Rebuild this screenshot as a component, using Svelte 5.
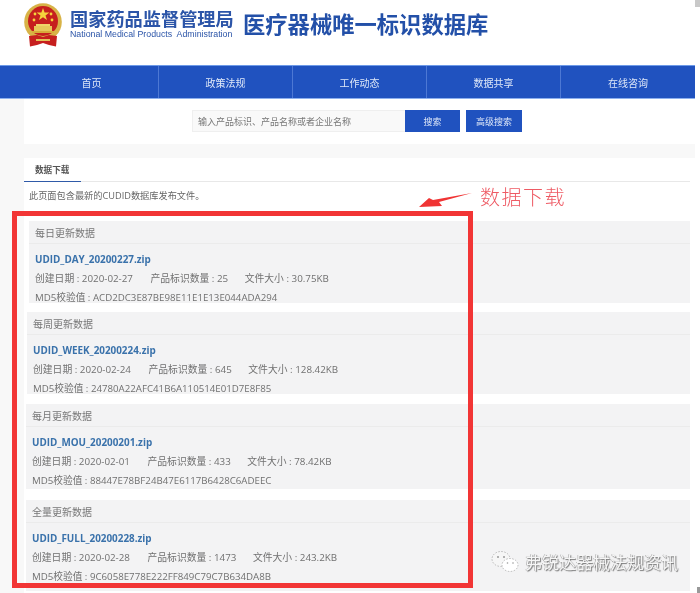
<script>
  const NAV = ['首页', '政策法规', '工作动态', '数据共享', '在线咨询'];
  const PANELS = [
    { title: '每日更新数据', file: 'UDID_DAY_20200227.zip', date: '2020-02-27', count: '25', size: '30.75KB', md5: 'ACD2DC3E87BE98E11E1E13E044ADA294', left: 5, gap: 9, height: 82 },
    { title: '每周更新数据', file: 'UDID_WEEK_20200224.zip', date: '2020-02-24', count: '645', size: '128.42KB', md5: '24780A22AFC41B6A110514E01D7E8F85', left: 3, gap: 10, height: 82 },
    { title: '每月更新数据', file: 'UDID_MOU_20200201.zip', date: '2020-02-01', count: '433', size: '78.42KB', md5: '88447E78BF24B47E6117B6428C6ADEEC', left: 2, gap: 11, height: 85 },
    { title: '全量更新数据', file: 'UDID_FULL_20200228.zip', date: '2020-02-28', count: '1473', size: '243.2KB', md5: '9C6058E778E222FF849C79C7B634DA8B', left: 2, gap: 0, height: 91 },
  ];
</script>

<div class="page">
  <header class="top">
    <svg class="emblem" viewBox="0 0 40 44" width="40" height="44">
      <circle cx="20" cy="19" r="18.8" fill="#d8b347" />
      <circle cx="20" cy="18" r="15" fill="#c61f1e" />
      <polygon points="20,5 21.6,9.6 26.4,9.6 22.5,12.4 24,17 20,14.2 16,17 17.5,12.4 13.6,9.6 18.4,9.6" fill="#f5d33c" />
      <circle cx="12" cy="11" r="1.4" fill="#f5d33c" />
      <circle cx="28" cy="11" r="1.4" fill="#f5d33c" />
      <circle cx="11" cy="17" r="1.4" fill="#f5d33c" />
      <circle cx="29" cy="17" r="1.4" fill="#f5d33c" />
      <rect x="13" y="21" width="14" height="2" fill="#efd469" />
      <rect x="11" y="23" width="18" height="5" fill="#e6c85a" />
      <rect x="9" y="28" width="22" height="2" fill="#d7ab3a" />
      <path d="M6 33 L14 32 L20 34 L26 32 L34 33 L33 43.5 L26 42 L20 40 L14 42 L7 43.5 Z" fill="#c61f1e" />
      <rect x="13" y="36" width="14" height="2" fill="#e2c25a" />
    </svg>
    <div class="agency">
      <div class="agency-cn">国家药品监督管理局</div>
      <div class="agency-en">National Medical Products&nbsp; Administration</div>
    </div>
    <h1 class="db-title">医疗器械唯一标识数据库</h1>
  </header>

  <nav class="nav">
    {#each NAV as item}
      <a class="nav-item" href="#top">{item}</a>
    {/each}
  </nav>

  <main class="body">
    <section class="search">
      <input class="search-input" type="text" placeholder="输入产品标识、产品名称或者企业名称" />
      <button class="btn">搜索</button>
      <button class="btn btn-adv">高级搜索</button>
    </section>

    <section class="content">
      <div class="tabs"><span class="tab">数据下载</span></div>
      <p class="intro">此页面包含最新的CUDID数据库发布文件。</p>

      {#each PANELS as p}
        <article class="panel" style:margin-left="{p.left}px" style:margin-bottom="{p.gap}px" style:height="{p.height}px">
          <div class="panel-head">{p.title}</div>
          <div class="panel-body">
            <a class="file" href="#top">{p.file}</a>
            <div class="meta">
              <span class="m-date">创建日期 : {p.date}</span>
              <span class="m-count">产品标识数量 : {p.count}</span>
              <span>文件大小 : {p.size}</span>
            </div>
            <div class="meta md5">MD5校验值 : {p.md5}</div>
          </div>
        </article>
      {/each}
    </section>
  </main>

  <!-- annotation drawn on top of the screenshot -->
  <div class="red-box"></div>
  <svg class="arrow" viewBox="0 0 56 18" width="56" height="18">
    <polygon points="54,1 21,10 24,14 1,15 11,6 15,8" fill="#f03434" />
  </svg>
  <div class="note">数据下载</div>

  <div class="watermark">
    <svg viewBox="0 0 30 24" width="30" height="24">
      <ellipse cx="11" cy="9" rx="9" ry="7.5" fill="#f6f6f6" stroke="#aaa" stroke-width="0.8" stroke-dasharray="1.5 1.5" />
      <ellipse cx="20" cy="15" rx="8" ry="6.5" fill="#fff" stroke="#aaa" stroke-width="0.8" stroke-dasharray="1.5 1.5" />
      <circle cx="8" cy="7" r="1" fill="#999" />
      <circle cx="14" cy="7" r="1" fill="#999" />
      <circle cx="17.5" cy="13" r="0.8" fill="#999" />
      <circle cx="23" cy="13" r="0.8" fill="#999" />
    </svg>
    <span>弗锐达器械法规资讯</span>
  </div>

  <div class="scroll-thumb"></div>
  <div class="scroll-thumb bottom"></div>
</div>

<style>
  :global(body) {
    margin: 0;
    background: #fff;
  }

  .page {
    position: relative;
    width: 700px;
    height: 593px;
    overflow: hidden;
    background: #fff;
    font-family: "Open Sans", "Noto Sans CJK SC", sans-serif;
    color: #666;
    filter: blur(0.35px);
  }

  .top {
    height: 65px;
    display: flex;
    align-items: flex-start;
    padding-left: 23px;
    box-sizing: border-box;
  }

  .emblem { margin-top: 3px; flex: none; }

  .agency {
    margin-left: 7px;
    margin-top: 8px;
    width: 164px;
    color: #2c55a8;
  }
  .agency-cn {
    font: 700 18.2px/21px "Noto Sans CJK SC", sans-serif;
    white-space: nowrap;
  }
  .agency-en {
    font: 400 8.8px/10px "Liberation Sans", sans-serif;
    white-space: nowrap;
  }

  .db-title {
    margin: 7px 0 0 9px;
    font: 700 22.3px/32px "Noto Sans CJK SC", sans-serif;
    color: #2350a8;
    white-space: nowrap;
  }

  .nav {
    width: 695px;
    height: 34px;
    box-sizing: border-box;
    padding-left: 25px;
    display: grid;
    grid-template-columns: repeat(5, 134px);
    background: #2052bf;
    border-top: 1px solid #6d9ae8;
    border-bottom: 1px solid #8db0ee;
  }
  .nav-item {
    display: flex;
    align-items: center;
    justify-content: center;
    font: 400 10px "Noto Sans CJK SC", sans-serif;
    color: #dfe8f8;
    text-decoration: none;
    border-right: 1px solid #4d78d4;
  }
  .nav-item:last-child { border-right: 0; }

  .body {
    width: 695px;
    height: 494px;
    box-sizing: border-box;
    padding-left: 24px;
    background: #f8f8f8;
  }

  .search {
    height: 45px;
    background: #fff;
    box-sizing: border-box;
    padding: 11px 0 0 168px;
    display: flex;
    align-items: flex-start;
  }
  .search-input {
    width: 213px;
    height: 22px;
    box-sizing: border-box;
    padding: 0 5px;
    background: #f9f9f9;
    border: 1px solid #efefef;
    border-right: 0;
    outline: none;
    font: 400 9px "Noto Sans CJK SC", sans-serif;
  }
  .search-input::placeholder { color: #777; }

  .btn {
    width: 55px;
    height: 22px;
    padding: 0;
    border: 0;
    background: #2052bf;
    color: #dfe8f8;
    font: 400 9px "Noto Sans CJK SC", sans-serif;
  }
  .btn-adv { margin-left: 6px; width: 56px; }

  .content {
    margin-top: 14px;
    height: 435px;
    background: #fff;
    padding-right: 5px;
  }

  .tabs {
    height: 24px;
    box-sizing: border-box;
    border-bottom: 1.5px solid #e8e8e8;
  }
  .tab {
    display: block;
    width: 57px;
    height: 24px;
    box-sizing: border-box;
    padding-left: 11px;
    border-bottom: 1.5px solid #2f5aa8;
    font: 700 8.6px/22px "Noto Sans CJK SC", sans-serif;
    color: #555;
  }

  .intro {
    margin: 0 0 18px 5px;
    padding-top: 7px;
    font-size: 9.2px;
    line-height: 14px;
    height: 14px;
    color: #666;
  }

  .panel {
    box-sizing: border-box;
    background: #f3f3f4;
    overflow: hidden;
  }
  .panel-head {
    height: 23px;
    box-sizing: border-box;
    padding-left: 6px;
    border-bottom: 1px solid #ebebeb;
    font-size: 10px;
    line-height: 25px;
    color: #777;
  }
  .panel-body { padding: 5px 0 0 6px; }

  .file {
    display: block;
    height: 20px;
    font-size: 9.9px;
    font-weight: 700;
    line-height: 20px;
    color: #3a72ab;
    text-decoration: none;
  }
  .meta {
    height: 19.3px;
    font-size: 9.8px;
    line-height: 19.3px;
    color: #707070;
    white-space: nowrap;
  }
  .md5 { font-size: 9.7px; }
  .m-date { margin-right: 15px; }
  .m-count { margin-right: 14px; }

  .red-box {
    position: absolute;
    left: 12px;
    top: 211px;
    width: 461px;
    height: 377px;
    box-sizing: border-box;
    border: 5px solid #f23535;
  }
  .arrow {
    position: absolute;
    left: 418px;
    top: 192px;
  }
  .note {
    position: absolute;
    left: 480px;
    top: 182px;
    font: 300 20px/30px "Noto Sans CJK SC", sans-serif;
    letter-spacing: 1.5px;
    color: #ee5a64;
  }

  .watermark {
    position: absolute;
    left: 490px;
    top: 550px;
    display: flex;
    align-items: center;
    gap: 5px;
    font: 400 17px/24px "Noto Sans CJK SC", sans-serif;
    color: #f6f6f6;
    text-shadow: 1px 1px 1px #777, -0.5px -0.5px 0.5px #999;
  }

  .scroll-thumb {
    position: absolute;
    right: 0;
    top: 0;
    width: 5px;
    height: 7px;
    background: #c9c9c9;
  }
  .scroll-thumb.bottom {
    top: auto;
    bottom: 0;
    width: 3px;
    height: 6px;
    background: #999;
  }
</style>
